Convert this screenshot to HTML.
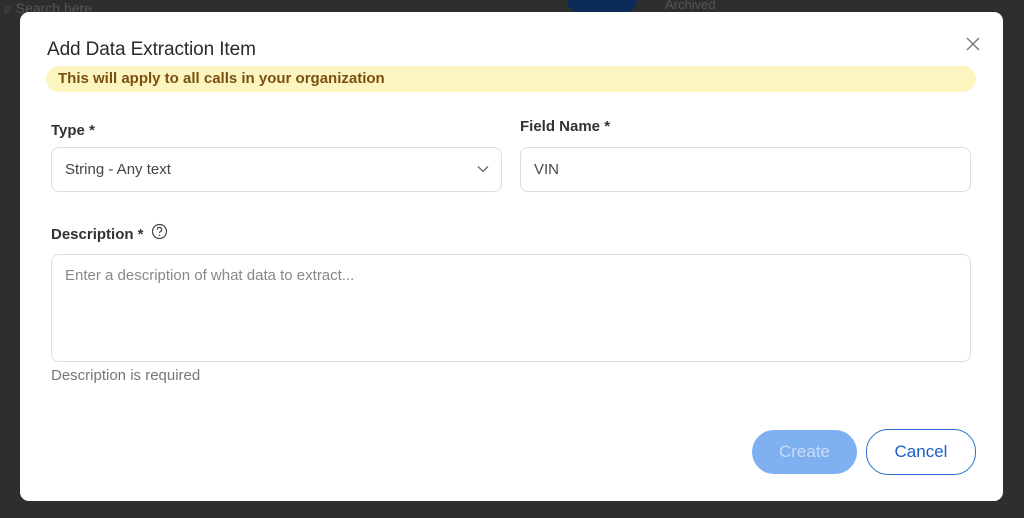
<!DOCTYPE html>
<html><head><style>
*{box-sizing:border-box;margin:0;padding:0}
body{width:1024px;height:518px;background:#2e2e2e;position:relative;overflow:hidden;font-family:"Liberation Sans",sans-serif}
.bg{position:absolute;color:#555;font-size:14px}
.modal{position:absolute;left:20px;top:12px;width:983px;height:489px;background:#fff;border-radius:9px}
.abs{position:absolute}
.title{left:27px;top:27px;font-size:19px;color:#2a2a2a;letter-spacing:-.1px}
.banner{left:26px;top:54px;width:930px;height:26px;background:#fdf5c0;border-radius:13px;color:#7a5012;font-size:15px;font-weight:bold;padding:4px 12px}
.lbl{font-size:15px;color:#333;font-weight:bold}
.inp{border:1px solid #ddd;border-radius:8px;font-size:15px;color:#444;padding:0 13px;display:flex;align-items:center}
.btn{border-radius:22px;font-size:17px;display:flex;align-items:center;justify-content:center}
</style></head><body>
<div class="bg" style="left:4px;top:0px;color:#555">⌕ Search here</div>
<div class="bg" style="left:567px;top:-10px;width:70px;height:22px;background:#0b2a55;border-radius:11px"></div>
<div class="bg" style="left:665px;top:-3px;color:#555;font-size:13px">Archived</div>
<div class="modal">
<div class="abs title">Add Data Extraction Item</div>
<svg class="abs" style="left:945px;top:24px" width="16" height="16" viewBox="0 0 16 16"><path d="M2 2L14 14M14 2L2 14" stroke="#777" stroke-width="1.4"/></svg>
<div class="abs banner">This will apply to all calls in your organization</div>
<div class="abs lbl" style="left:31px;top:110px">Type *</div>
<div class="abs inp" style="left:31px;top:135px;width:451px;height:45px">String - Any text</div>
<svg class="abs" style="left:457px;top:153px" width="12" height="8" viewBox="0 0 12 8"><path d="M1 1.5L6 6.5L11 1.5" stroke="#666" stroke-width="1.3" fill="none"/></svg>
<div class="abs lbl" style="left:500px;top:106px">Field Name *</div>
<div class="abs inp" style="left:500px;top:135px;width:451px;height:45px">VIN</div>
<div class="abs lbl" style="left:31px;top:214px">Description *</div>
<svg class="abs" style="left:131px;top:211px" width="17" height="17" viewBox="0 0 17 17"><circle cx="8.5" cy="8.5" r="7" stroke="#444" stroke-width="1.2" fill="none"/><path d="M6.3 6.6a2.2 2.2 0 1 1 3 2c-.6.3-.8.7-.8 1.4" stroke="#444" stroke-width="1.2" fill="none"/><circle cx="8.5" cy="12.3" r=".8" fill="#444"/></svg>
<div class="abs inp" style="left:31px;top:242px;width:920px;height:108px;align-items:flex-start;padding-top:12px;color:#888">Enter a description of what data to extract...</div>
<div class="abs" style="left:31px;top:355px;font-size:15px;color:#777">Description is required</div>
<div class="abs btn" style="left:732px;top:418px;width:105px;height:44px;background:#7fb0ef;color:#c8dcf7">Create</div>
<div class="abs btn" style="left:846px;top:417px;width:110px;height:46px;border:1px solid #2a6fd1;color:#1a5fc8">Cancel</div>
</div>
</body></html>
